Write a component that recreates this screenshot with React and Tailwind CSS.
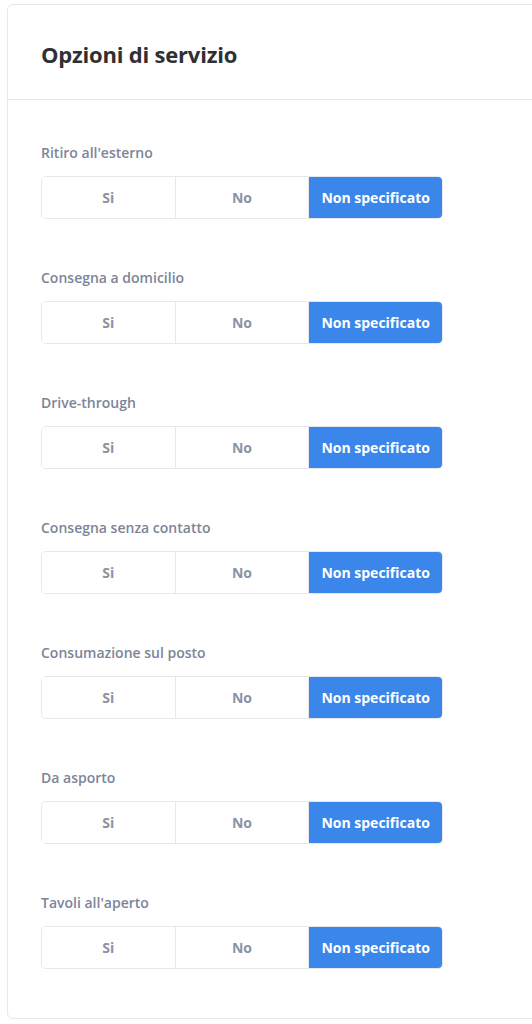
import React, { useState } from 'react';

const options = [
  'Ritiro all\'esterno',
  'Consegna a domicilio',
  'Drive-through',
  'Consegna senza contatto',
  'Consumazione sul posto',
  'Da asporto',
  'Tavoli all\'aperto',
];

const choices = ['Si', 'No', 'Non specificato'];

const Segmented = ({ value, onChange }) => (
  <div className="flex w-[402px] h-[43px] rounded-[5px] border border-[#e6e8ec] overflow-hidden">
    {choices.map((c, i) => {
      const active = value === c;
      return (
        <button
          key={c}
          onClick={() => onChange(c)}
          className={`flex-1 flex items-center justify-center text-[14px] font-bold ${
            i > 0 ? 'border-l border-[#e6e8ec]' : ''
          } ${active ? 'bg-[#3b86ea] text-white border-[#3b86ea]' : 'bg-white text-[#8a93a5]'}`}
        >
          {c}
        </button>
      );
    })}
  </div>
);

export default function App() {
  const [values, setValues] = useState(
    Object.fromEntries(options.map(o => [o, 'Non specificato']))
  );

  return (
    <div className="w-[532px] h-[1024px] overflow-hidden bg-white pt-[4px] pl-[7px]" style={{ fontFamily: '"Open Sans", "Noto Sans", sans-serif' }}>
      <div className="w-[600px] h-[1015px] border border-[#e6e8ec] rounded-[6px] bg-white">
        {/* Intestazione */}
        <div className="h-[95px] border-b border-[#e6e8ec] pl-[33px] pt-[5px] flex items-center">
          <h2 className="text-[22px] font-bold text-[#2f3033] tracking-[-0.2px]">Opzioni di servizio</h2>
        </div>

        {/* Opzioni */}
        <div className="pl-[33px] pt-[43px] flex flex-col gap-[49px]">
          {options.map(o => (
            <div key={o}>
              <div className="text-[14px] leading-[20px] font-semibold text-[#7c8598] mb-[13px]">{o}</div>
              <Segmented
                value={values[o]}
                onChange={v => setValues(prev => ({ ...prev, [o]: v }))}
              />
            </div>
          ))}
        </div>
      </div>
    </div>
  );
}
